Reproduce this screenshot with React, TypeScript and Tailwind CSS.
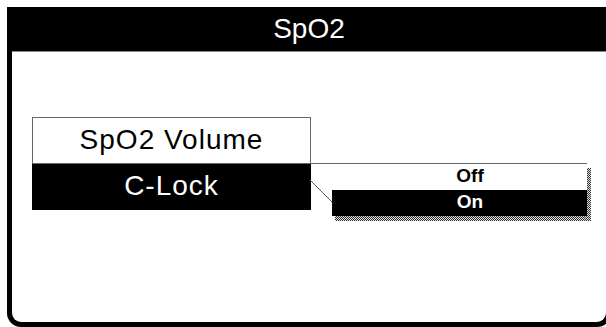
export default function App() {
  return (
    <div className="w-[606px] h-[327px] overflow-hidden bg-white pl-[7px] pt-[7px] font-['Liberation_Sans',Arial,sans-serif]">
      {/* device frame, right edge runs past the visible area */}
      <div className="w-[604px] h-[320px] border-x-[5px] border-b-[5px] border-black rounded-b-[14px] flex flex-col">
        <div className="h-[45px] shrink-0 bg-black border-b border-[#8a8a8a] flex items-center justify-center text-white text-[28px] leading-[32px]">
          SpO2
        </div>

        <div className="relative flex-1 pl-[20px] pt-[65px]">
          <div className="w-[279px] flex flex-col text-[28px] leading-[32px] tracking-[1px] text-center">
            <div className="h-[47px] border border-[#666] bg-white text-black pt-[6px]">SpO2 Volume</div>
            <div className="h-[46px] bg-black text-white pt-[6px]">C-Lock</div>
          </div>

          {/* option popup for C-Lock */}
          <div className="absolute left-[298px] top-[111px] w-[277px] h-[54px] border-t border-[#666] flex flex-col pl-[22px] font-bold text-[19px] leading-[20px]">
            <div className="absolute left-[25px] top-[4px] -right-[4px] -bottom-[4px] bg-[repeating-conic-gradient(#333_0_25%,#ddd_0_50%)] bg-[length:2px_2px]" />
            <svg className="absolute left-0 top-0 w-[24px] h-[42px] overflow-visible" viewBox="0 0 24 42">
              <line x1="0" y1="16" x2="22" y2="38" stroke="#555" strokeWidth="1" />
            </svg>
            <div className="relative h-[26px] pl-[21px] pt-[2px] text-center text-black bg-white">Off</div>
            <div className="relative h-[26px] pl-[21px] pt-[2px] text-center text-white bg-black">On</div>
          </div>
        </div>
      </div>
    </div>
  );
}
